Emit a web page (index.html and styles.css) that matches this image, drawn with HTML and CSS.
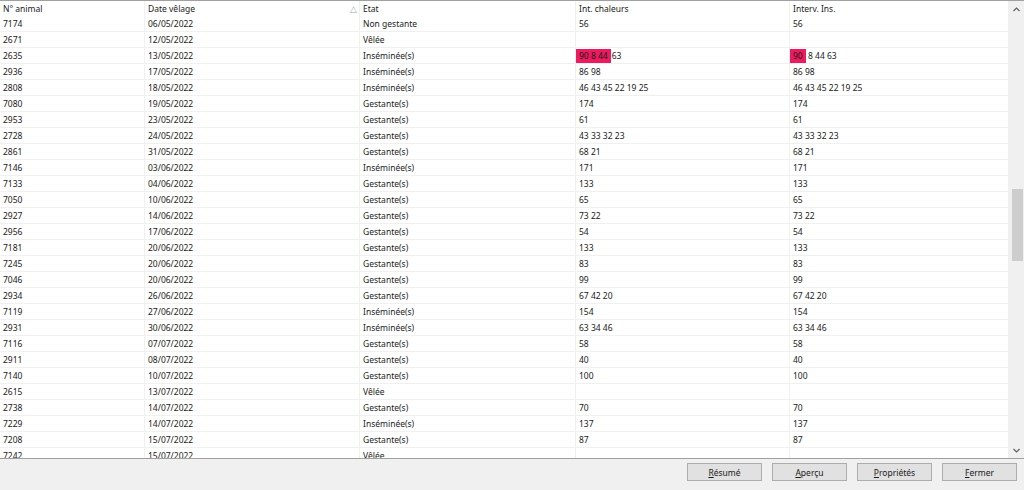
FILE: index.html
```html
<!DOCTYPE html>
<html lang="fr">
<head>
<meta charset="utf-8">
<title>Liste</title>
<link rel="stylesheet" href="styles.css">
</head>
<body>
<div class="list">
  <div class="table">
    <div class="row head">
      <div class="cell">N° animal</div>
      <div class="cell sorted">Date vêlage<span class="sort">△</span></div>
      <div class="cell">Etat</div>
      <div class="cell">Int. chaleurs</div>
      <div class="cell">Interv. Ins.</div>
    </div>
    <div class="row"><div class="cell">7174</div><div class="cell">06/05/2022</div><div class="cell">Non gestante</div><div class="cell">56</div><div class="cell">56</div></div>
    <div class="row"><div class="cell">2671</div><div class="cell">12/05/2022</div><div class="cell">Vêlée</div><div class="cell"></div><div class="cell"></div></div>
    <div class="row"><div class="cell">2635</div><div class="cell">13/05/2022</div><div class="cell">Inséminée(s)</div><div class="cell"><span class="hl">90 8 44</span><span class="after">63</span></div><div class="cell"><span class="hl">90</span> 8 44 63</div></div>
    <div class="row"><div class="cell">2936</div><div class="cell">17/05/2022</div><div class="cell">Inséminée(s)</div><div class="cell">86 98</div><div class="cell">86 98</div></div>
    <div class="row"><div class="cell">2808</div><div class="cell">18/05/2022</div><div class="cell">Inséminée(s)</div><div class="cell">46 43 45 22 19 25</div><div class="cell">46 43 45 22 19 25</div></div>
    <div class="row"><div class="cell">7080</div><div class="cell">19/05/2022</div><div class="cell">Gestante(s)</div><div class="cell">174</div><div class="cell">174</div></div>
    <div class="row"><div class="cell">2953</div><div class="cell">23/05/2022</div><div class="cell">Gestante(s)</div><div class="cell">61</div><div class="cell">61</div></div>
    <div class="row"><div class="cell">2728</div><div class="cell">24/05/2022</div><div class="cell">Gestante(s)</div><div class="cell">43 33 32 23</div><div class="cell">43 33 32 23</div></div>
    <div class="row"><div class="cell">2861</div><div class="cell">31/05/2022</div><div class="cell">Gestante(s)</div><div class="cell">68 21</div><div class="cell">68 21</div></div>
    <div class="row"><div class="cell">7146</div><div class="cell">03/06/2022</div><div class="cell">Inséminée(s)</div><div class="cell">171</div><div class="cell">171</div></div>
    <div class="row"><div class="cell">7133</div><div class="cell">04/06/2022</div><div class="cell">Gestante(s)</div><div class="cell">133</div><div class="cell">133</div></div>
    <div class="row"><div class="cell">7050</div><div class="cell">10/06/2022</div><div class="cell">Gestante(s)</div><div class="cell">65</div><div class="cell">65</div></div>
    <div class="row"><div class="cell">2927</div><div class="cell">14/06/2022</div><div class="cell">Gestante(s)</div><div class="cell">73 22</div><div class="cell">73 22</div></div>
    <div class="row"><div class="cell">2956</div><div class="cell">17/06/2022</div><div class="cell">Gestante(s)</div><div class="cell">54</div><div class="cell">54</div></div>
    <div class="row"><div class="cell">7181</div><div class="cell">20/06/2022</div><div class="cell">Gestante(s)</div><div class="cell">133</div><div class="cell">133</div></div>
    <div class="row"><div class="cell">7245</div><div class="cell">20/06/2022</div><div class="cell">Gestante(s)</div><div class="cell">83</div><div class="cell">83</div></div>
    <div class="row"><div class="cell">7046</div><div class="cell">20/06/2022</div><div class="cell">Gestante(s)</div><div class="cell">99</div><div class="cell">99</div></div>
    <div class="row"><div class="cell">2934</div><div class="cell">26/06/2022</div><div class="cell">Gestante(s)</div><div class="cell">67 42 20</div><div class="cell">67 42 20</div></div>
    <div class="row"><div class="cell">7119</div><div class="cell">27/06/2022</div><div class="cell">Inséminée(s)</div><div class="cell">154</div><div class="cell">154</div></div>
    <div class="row"><div class="cell">2931</div><div class="cell">30/06/2022</div><div class="cell">Inséminée(s)</div><div class="cell">63 34 46</div><div class="cell">63 34 46</div></div>
    <div class="row"><div class="cell">7116</div><div class="cell">07/07/2022</div><div class="cell">Gestante(s)</div><div class="cell">58</div><div class="cell">58</div></div>
    <div class="row"><div class="cell">2911</div><div class="cell">08/07/2022</div><div class="cell">Gestante(s)</div><div class="cell">40</div><div class="cell">40</div></div>
    <div class="row"><div class="cell">7140</div><div class="cell">10/07/2022</div><div class="cell">Gestante(s)</div><div class="cell">100</div><div class="cell">100</div></div>
    <div class="row"><div class="cell">2615</div><div class="cell">13/07/2022</div><div class="cell">Vêlée</div><div class="cell"></div><div class="cell"></div></div>
    <div class="row"><div class="cell">2738</div><div class="cell">14/07/2022</div><div class="cell">Gestante(s)</div><div class="cell">70</div><div class="cell">70</div></div>
    <div class="row"><div class="cell">7229</div><div class="cell">14/07/2022</div><div class="cell">Inséminée(s)</div><div class="cell">137</div><div class="cell">137</div></div>
    <div class="row"><div class="cell">7208</div><div class="cell">15/07/2022</div><div class="cell">Gestante(s)</div><div class="cell">87</div><div class="cell">87</div></div>
    <div class="row"><div class="cell">7242</div><div class="cell">15/07/2022</div><div class="cell">Vêlée</div><div class="cell"></div><div class="cell"></div></div>
  </div>
  <div class="scrollbar">
    <div class="arrow"><svg width="7" height="5" viewBox="0 0 7 5"><path d="M0.5 4 L3.5 1 L6.5 4" fill="none" stroke="#606060" stroke-width="1.2"/></svg></div>
    <div class="track"><div class="thumb"></div></div>
    <div class="arrow"><svg width="7" height="5" viewBox="0 0 7 5"><path d="M0.5 1 L3.5 4 L6.5 1" fill="none" stroke="#606060" stroke-width="1.2"/></svg></div>
  </div>
</div>
<div class="footer">
  <button class="btn"><u>R</u>ésumé</button>
  <button class="btn"><u>A</u>perçu</button>
  <button class="btn"><u>P</u>ropriétés</button>
  <button class="btn"><u>F</u>ermer</button>
</div>
</body>
</html>
```
FILE: styles.css
```css
html, body {
  margin: 0;
  padding: 0;
}
body {
  width: 1024px;
  height: 490px;
  overflow: hidden;
  background: #f0f0f0;
  font-family: "Noto Sans", "Open Sans", sans-serif;
  font-size: 8.5px;
  color: #1a1a1a;
}
.list {
  box-sizing: border-box;
  height: 459px;
  border-top: 1px solid #a0a0a0;
  border-bottom: 1px solid #a0a0a0;
  display: flex;
  background: #fff;
}
.table {
  flex: 1;
  overflow: hidden;
  background: #fff;
}
.row {
  display: grid;
  grid-template-columns: 145px 215px 216px 214px 1fr;
  height: 16px;
  box-sizing: border-box;
  border-bottom: 1px solid #f0f0f0;
}
.row.head {
  height: 15px;
  border-bottom: none;
}
.cell {
  border-right: 1px solid #f0f0f0;
  padding-left: 3px;
  line-height: 16px;
  white-space: nowrap;
  overflow: hidden;
}
.head .cell {
  line-height: 15px;
}
.sorted {
  display: flex;
  justify-content: space-between;
}
.sort {
  color: #a8a8a8;
  font-size: 9px;
  padding-right: 2px;
}
.hl {
  display: inline-block;
  background: #ec1a5e;
  margin-left: -3px;
  padding-left: 3px;
  padding-right: 3px;
  line-height: 14px;
  margin-top: 1px;
  vertical-align: top;
}
.after {
  padding-left: 1px;
}
.scrollbar {
  width: 15px;
  background: #f0f0f0;
  display: flex;
  flex-direction: column;
}
.arrow {
  height: 16px;
  display: flex;
  align-items: center;
  justify-content: center;
}
.track {
  flex: 1;
  padding: 0 1px 0 3px;
}
.thumb {
  margin-top: 172px;
  height: 72px;
  background: #cdcdcd;
}
.footer {
  height: 31px;
  box-sizing: border-box;
  display: flex;
  justify-content: flex-end;
  align-items: flex-start;
  gap: 10px;
  padding: 4px 7px 0 0;
}
.btn {
  width: 75px;
  height: 18px;
  margin: 0;
  padding: 0;
  background: #e1e1e1;
  border: 1px solid #adadad;
  font-family: "Noto Sans", "Open Sans", sans-serif;
  font-size: 8.5px;
  color: #1a1a1a;
}
```
